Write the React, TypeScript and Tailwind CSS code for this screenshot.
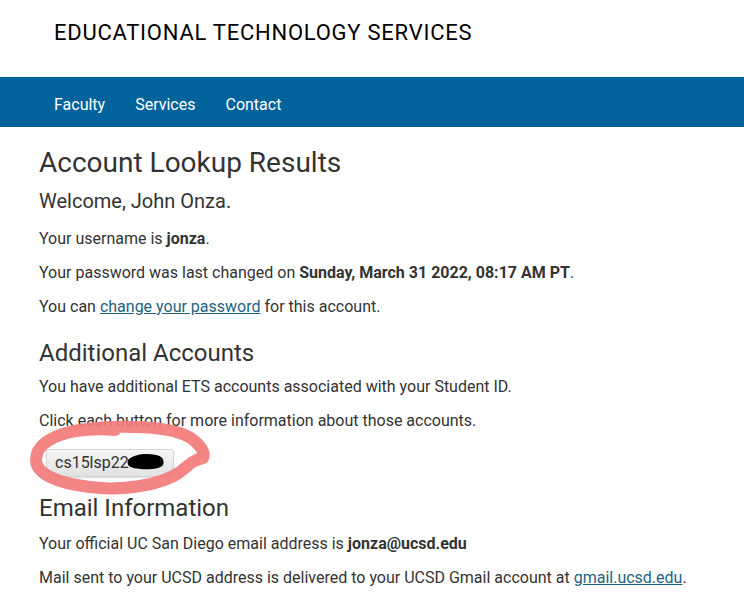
const Nav = () => {
  const items = ['Faculty', 'Services', 'Contact'];
  return (
    <nav className="h-[50px] bg-[#00639b] flex items-center pl-[54px] pt-[5px] gap-[30px]">
      {items.map((item) => (
        <a key={item} href="#" className="text-white text-[16px] leading-none">
          {item}
        </a>
      ))}
    </nav>
  );
};

const App = () => {
  return (
    <div className="w-[744px] h-[605px] overflow-hidden bg-white text-[#333] font-['Roboto',sans-serif]">
      <header className="h-[77px] pl-[54px] pt-[20px]">
        <h1 className="text-[22px] leading-[26px] text-black tracking-[0.75px]">
          EDUCATIONAL TECHNOLOGY SERVICES
        </h1>
      </header>
      <Nav />

      <main className="px-[39px] pt-[19px]">
        <h2 className="text-[28px] leading-[34px] text-[#333]">Account Lookup Results</h2>
        <p className="text-[20px] leading-[24px] mt-[9px]">Welcome, John Onza.</p>
        <p className="text-[16px] leading-[20px] mt-[16px]">
          Your username is <b className="font-bold">jonza</b>.
        </p>
        <p className="text-[16px] leading-[20px] mt-[14px]">
          Your password was last changed on <b className="font-bold">Sunday, March 31 2022, 08:17 AM PT</b>.
        </p>
        <p className="text-[16px] leading-[20px] mt-[14px]">
          You can{' '}
          <a href="#" className="text-[#1c6384] underline">
            change your password
          </a>{' '}
          for this account.
        </p>

        <h2 className="text-[24px] leading-[30px] mt-[21px]">Additional Accounts</h2>
        <p className="text-[16px] leading-[20px] mt-[9px]">
          You have additional ETS accounts associated with your Student ID.
        </p>
        <p className="text-[16px] leading-[20px] mt-[14px]">
          Click each button for more information about those accounts.
        </p>

        <div className="relative mt-[15px] h-[38px]">
          <button className="ml-[7px] mt-[3px] h-[28px] w-[128px] text-left pl-[8px] text-[16px] text-[#333] rounded-[3px] border border-[#d4d4d4] bg-gradient-to-b from-[#f5f5f5] to-[#e2e2e2] shadow-[0_1px_2px_rgba(0,0,0,0.15)]">
            cs15lsp22
          </button>
          <svg
            className="absolute left-[-9px] top-[-28px] pointer-events-none"
            width="182"
            height="84"
            viewBox="0 0 182 84"
          >
            <path
              d="M30 17 C60 6 130 6 155 17 C168 23 176 34 173 40 C163 42 160 46 150 54 C130 68 90 73 60 69 C25 65 6 55 6 42 C6 28 20 18 45 13 C60 11 75 11 85 12"
              fill="none"
              stroke="#f27c7c"
              strokeOpacity="0.93"
              strokeWidth="12"
              strokeLinecap="round"
              strokeLinejoin="round"
            />
            <path
              d="M98 42 C104 36 116 35 126 37 C132 38 135 42 133 47 C130 51 120 52 110 51 C102 50 96 49 98 42 Z"
              fill="#000"
            />
          </svg>
        </div>

        <h2 className="text-[24px] leading-[30px] mt-[9px]">Email Information</h2>
        <p className="text-[16px] leading-[20px] mt-[11px]">
          Your official UC San Diego email address is <b className="font-bold">jonza@ucsd.edu</b>
        </p>
        <p className="text-[16px] leading-[20px] mt-[14px]">
          Mail sent to your UCSD address is delivered to your UCSD Gmail account at{' '}
          <a href="#" className="text-[#1c6384] underline">
            gmail.ucsd.edu
          </a>
          .
        </p>
      </main>
    </div>
  );
};

export default App;
